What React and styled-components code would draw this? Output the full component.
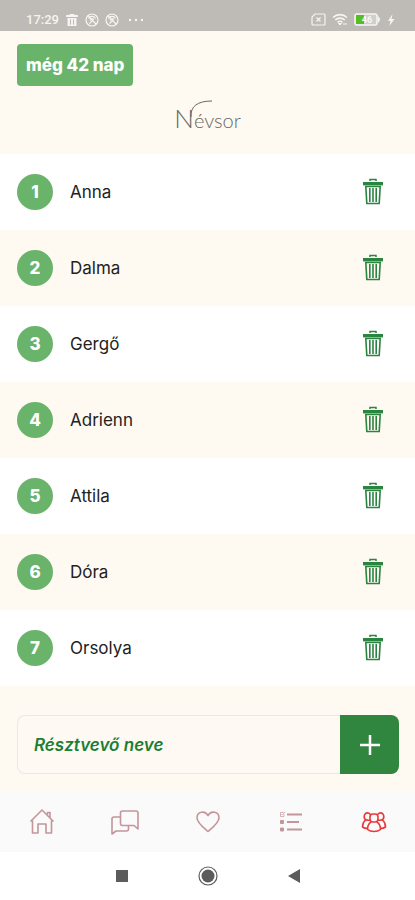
import React from "react";
import styled, { createGlobalStyle } from "styled-components";

const GlobalStyle = createGlobalStyle`
  * { box-sizing: border-box; }
  body { margin: 0; background: #fff; font-family: Inter, "Open Sans", sans-serif; }
  button, input { font: inherit; }
`;

const Screen = styled.div`
  display: flex;
  flex-direction: column;
  min-height: 100vh;
  background: #fef9f1;
`;

const StatusBar = styled.div`
  display: flex;
  align-items: center;
  justify-content: space-between;
  height: 31px;
  padding: 8px 20px 0 26px;
  background: #bebab5;
  color: #f6f4f2;
  font: 500 13px/16px Roboto, sans-serif;
`;

const StatusGroup = styled.div`
  display: flex;
  align-items: center;
  gap: 6px;
`;

const Header = styled.header`
  display: flex;
  flex-direction: column;
  align-items: center;
  padding: 13px 17px 16px;
`;

const Countdown = styled.div`
  align-self: flex-start;
  padding: 0 9px;
  border-radius: 4px;
  background: #69b36b;
  color: #fff;
  font-size: 17px;
  font-weight: 800;
  line-height: 42px;
`;

const Title = styled.h1`
  position: relative;
  margin: 14px 0 0;
  color: #66685f;
  font-family: Lato, sans-serif;
  font-size: 20px;
  font-weight: 300;
  line-height: 36px;
`;

const Initial = styled.span`
  font-size: 26px;
`;

const Flourish = styled.svg`
  position: absolute;
  top: 0;
  left: 16px;
  pointer-events: none;
`;

const List = styled.ol`
  margin: 0;
  padding: 0;
  list-style: none;
`;

const Row = styled.li`
  display: flex;
  align-items: center;
  gap: 17px;
  height: 76px;
  padding: 0 29px 0 17px;
  color: #222;
  font-size: 17px;

  &:nth-child(odd) { background: #fff; }
`;

const Number = styled.span`
  display: grid;
  place-items: center;
  width: 36px;
  height: 36px;
  border-radius: 50%;
  background: #69b36b;
  color: #fff;
  font-weight: 800;
`;

const Name = styled.span`
  flex: 1;
`;

const IconButton = styled.button`
  display: grid;
  place-items: center;
  padding: 0;
  border: 0;
  background: none;
  color: ${(p) => p.$color || "inherit"};
`;

const AddForm = styled.form`
  display: flex;
  height: 59px;
  margin: 29px 16px 17px 17px;
`;

const NameInput = styled.input`
  flex: 1;
  min-width: 0;
  padding: 0 16px;
  border: 1px solid #ece8e3;
  border-right: 0;
  border-radius: 8px 0 0 8px;
  background: #fef9f3;
  color: #1b7f35;
  font-size: 17px;
  font-style: italic;
  font-weight: 600;
  outline: none;

  &::placeholder { color: #1b7f35; opacity: 1; }
`;

const AddButton = styled.button`
  display: grid;
  place-items: center;
  width: 59px;
  padding: 0;
  border: 0;
  border-radius: 0 8px 8px 0;
  background: #30853f;
  color: #fff;
`;

const TabBar = styled.nav`
  display: grid;
  grid-template-columns: repeat(5, 1fr);
  height: 61px;
  margin-top: auto;
  background: #fafafa;
`;

const Tab = styled.a`
  display: grid;
  place-items: center;
  color: ${(p) => (p.$active ? "#e8383b" : "#c4959b")};
`;

const SystemBar = styled.div`
  display: flex;
  align-items: center;
  justify-content: center;
  gap: 62px;
  height: 48px;
  background: #fff;
`;

const StatusTrash = () => (
  <svg width="14" height="14" viewBox="0 0 14 14" fill="currentColor" aria-hidden="true">
    <path d="M4.500 1h5v1H13v2H1V2h3.500zM2.500 5h9v8h-9z" />
    <path d="M5.500 6.500v5M8.500 6.500v5" stroke="#bebab5" strokeWidth="1" />
  </svg>
);

const StatusDial = () => (
  <svg width="14" height="14" viewBox="0 0 14 14" fill="none" stroke="currentColor" strokeWidth="1.200" aria-hidden="true">
    <circle cx="7" cy="7" r="6" />
    <path d="M3.500 5.500a4 4 0 0 1 7 0M5 7.500a2.500 2.500 0 0 1 4-1M3 3l8 8M4.500 10.500l3-3 2 2" />
  </svg>
);

const StatusDots = () => (
  <svg width="18" height="14" viewBox="0 0 18 14" fill="currentColor" aria-hidden="true">
    <circle cx="5" cy="7" r="1.200" /><circle cx="11" cy="7" r="1.200" /><circle cx="17" cy="7" r="1.200" />
  </svg>
);

const StatusSim = () => (
  <svg width="15" height="13" viewBox="0 0 15 13" fill="none" stroke="currentColor" strokeWidth="1.200" aria-hidden="true">
    <path d="M4 1h9a1 1 0 0 1 1 1v9a1 1 0 0 1-1 1H2a1 1 0 0 1-1-1V4z" />
    <path d="M5.500 4.500l4 4M9.500 4.500l-4 4" />
  </svg>
);

const StatusWifi = () => (
  <svg width="16" height="13" viewBox="0 0 16 13" fill="none" stroke="currentColor" strokeWidth="1.600" aria-hidden="true">
    <path d="M1 4.500a10 10 0 0 1 14 0M3.200 7a7 7 0 0 1 9.600 0M5.500 9.300a4 4 0 0 1 5 0" />
    <path d="M8 12l-1.500-1.500h3zM12 10v2M14 10v2" strokeWidth="1" />
  </svg>
);

const StatusBattery = () => (
  <svg width="27" height="13" viewBox="0 0 27 13" role="img" aria-label="46">
    <rect x="1" y="1" width="22" height="11" rx="2" fill="#d0cfcc" stroke="#f6f4f2" strokeWidth="1.600" />
    <path d="M24 3q4 3.500 0 7z" fill="#f6f4f2" />
    <rect x="2" y="2" width="8" height="9" fill="#56bd27" />
    <text x="13" y="10" fontSize="9" fontWeight="700" textAnchor="middle" fill="#f8f8f5">46</text>
  </svg>
);

const StatusBolt = () => (
  <svg width="8" height="12" viewBox="0 0 8 12" fill="currentColor" aria-hidden="true">
    <path d="M5.500 0L1 7h2.500L2.500 12 7.500 5H4.500z" />
  </svg>
);

const TrashIcon = () => (
  <svg width="26" height="28" viewBox="0 0 26 28" fill="none" stroke="#2b8440" aria-hidden="true">
    <path d="M10 3V1.500h6V3" strokeWidth="1.500" />
    <rect x="3.700" y="4.700" width="18.600" height="2" strokeWidth="1.400" fill="#2b8440" />
    <path d="M5.800 8.500l1 17h12.400l1-17z" strokeWidth="1.600" />
    <path d="M9.800 10v14M13 10v14M16.200 10v14" strokeWidth="1.600" />
  </svg>
);

const PlusIcon = () => (
  <svg width="22" height="22" viewBox="0 0 22 22" stroke="currentColor" strokeWidth="2.500" aria-hidden="true">
    <path d="M11 1v20M1 11h20" />
  </svg>
);

const tabIcon = {
  width: 30,
  height: 30,
  viewBox: "0 0 30 30",
  fill: "none",
  stroke: "currentColor",
  strokeWidth: 1.6,
  strokeLinejoin: "round",
  "aria-hidden": true,
};

const HomeIcon = () => (
  <svg {...tabIcon}>
    <path d="M3.500 14.500L15 3 26.500 14.500M5.500 13.500v12.500H11V17h8v9h5.500V13.500M20.500 7.500V5.500H23v5" />
  </svg>
);

const ChatIcon = () => (
  <svg {...tabIcon}>
    <path d="M12.500 4H26q2 0 2 2v16l-4-3.500H12.500q-2 0-2-2V6q0-2 2-2z" />
    <path d="M10.500 10H4q-2 0-2 2v15l4-3h10.500q2 0 2-2v-3.500" />
  </svg>
);

const HeartIcon = () => (
  <svg {...tabIcon}>
    <path d="M15 24.500C11 21 4 16 4 10.800 4 4.500 12 3 15 8.500 18 3 26 4.500 26 10.800 26 16 19 21 15 24.500z" />
  </svg>
);

const ListIcon = () => (
  <svg {...tabIcon}>
    <path d="M11 7.500h15M11 15h12M11 22.500h15" strokeWidth="2" />
    <rect x="4.500" y="13.500" width="3" height="3" fill="currentColor" strokeWidth="1" />
    <rect x="4.500" y="21" width="3" height="3" fill="currentColor" strokeWidth="1" />
    <path d="M7.500 5.500h-3v4h3.500V7.500M5.500 7l1 1L9 5" strokeWidth="0.700" />
  </svg>
);

const PeopleIcon = () => (
  <svg {...tabIcon}>
    <rect x="11" y="7" width="8" height="8" rx="3" />
    <path d="M11.500 7.500Q9 5 6.500 6.500 4.500 8.500 5.500 11.500 7 14 11 13M18.500 7.500Q21 5 23.500 6.500 25.500 8.500 24.500 11.500 23 14 19 13" />
    <path d="M6.500 13Q3.500 15.500 3.500 20 5.500 21.500 8.500 21.500M23.500 13Q26.500 15.500 26.500 20 24.500 21.500 21.500 21.500" />
    <path d="M12.300 15Q8.500 17 8.500 22.500 11 24.500 15 24.500 19 24.500 21.500 22.500 21.500 17 17.700 15" />
  </svg>
);

const tabs = [
  { label: "Kezdőlap", Icon: HomeIcon },
  { label: "Üzenetek", Icon: ChatIcon },
  { label: "Kedvencek", Icon: HeartIcon },
  { label: "Lista", Icon: ListIcon },
  { label: "Névsor", Icon: PeopleIcon, active: true },
];

const names = ["Anna", "Dalma", "Gergő", "Adrienn", "Attila", "Dóra", "Orsolya"];

export default function App() {
  return (
    <Screen>
      <GlobalStyle />
      <StatusBar>
        <StatusGroup>
          <span>17:29</span>
          <StatusTrash />
          <StatusDial />
          <StatusDial />
          <StatusDots />
        </StatusGroup>
        <StatusGroup>
          <StatusSim />
          <StatusWifi />
          <StatusBattery />
          <StatusBolt />
        </StatusGroup>
      </StatusBar>
      <Header>
        <Countdown>még 42 nap</Countdown>
        <Title>
          <Initial>N</Initial>évsor
          <Flourish width="24" height="18" viewBox="0 0 24 18" fill="none" stroke="currentColor" aria-hidden="true">
            <path d="M1 17Q0 1 22 1" />
          </Flourish>
        </Title>
      </Header>
      <List>
        {names.map((name, i) => (
          <Row key={name}>
            <Number>{i + 1}</Number>
            <Name>{name}</Name>
            <IconButton type="button" aria-label={`${name} törlése`}>
              <TrashIcon />
            </IconButton>
          </Row>
        ))}
      </List>
      <AddForm onSubmit={(e) => e.preventDefault()}>
        <NameInput placeholder="Résztvevő neve" aria-label="Résztvevő neve" />
        <AddButton type="submit" aria-label="Hozzáadás">
          <PlusIcon />
        </AddButton>
      </AddForm>
      <TabBar>
        {tabs.map(({ label, Icon, active }) => (
          <Tab key={label} href="#" aria-label={label} $active={active}>
            <Icon />
          </Tab>
        ))}
      </TabBar>
      <SystemBar>
        <IconButton type="button" aria-label="Legutóbbiak" $color="#5c5c5c">
          <svg width="24" height="24" fill="currentColor"><rect x="6" y="6" width="12" height="12" /></svg>
        </IconButton>
        <IconButton type="button" aria-label="Kezdőképernyő" $color="#5c5c5c">
          <svg width="24" height="24" fill="currentColor">
            <circle cx="12" cy="12" r="6.500" />
            <circle cx="12" cy="12" r="9" fill="none" stroke="currentColor" strokeWidth="1.200" />
          </svg>
        </IconButton>
        <IconButton type="button" aria-label="Vissza" $color="#5c5c5c">
          <svg width="24" height="24" fill="currentColor"><path d="M18 5v14L6 12z" /></svg>
        </IconButton>
      </SystemBar>
    </Screen>
  );
}
